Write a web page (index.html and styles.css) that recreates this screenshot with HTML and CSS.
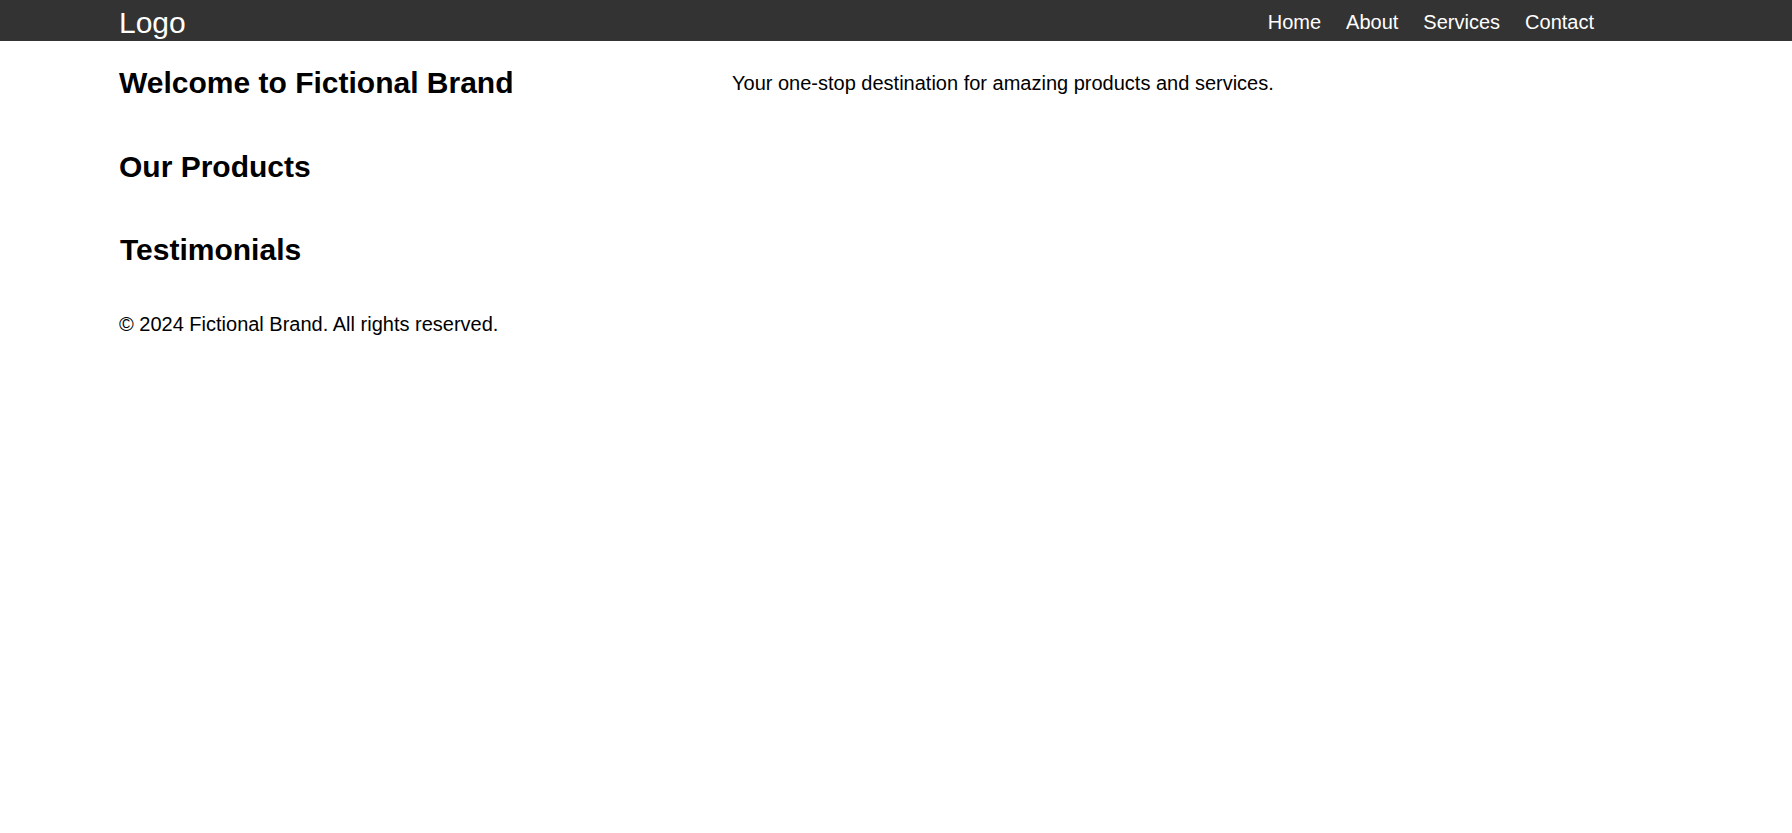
FILE: index.html
```html
<!DOCTYPE html>
<html lang="en">
<head>
<meta charset="utf-8">
<title>Fictional Brand</title>
<link rel="stylesheet" href="styles.css">
</head>
<body>
<header class="site-header">
  <div class="header-inner">
    <div class="logo">Logo</div>
    <nav class="nav">
      <a href="#">Home</a>
      <a href="#">About</a>
      <a href="#">Services</a>
      <a href="#">Contact</a>
    </nav>
  </div>
</header>
<main class="main">
  <section class="hero">
    <h2 class="hero-title">Welcome to Fictional Brand</h2>
    <p class="hero-text">Your one-stop destination for amazing products and services.</p>
  </section>
  <section class="section products">
    <h2 class="section-title">Our Products</h2>
  </section>
  <section class="section testimonials">
    <h2 class="section-title">Testimonials</h2>
  </section>
  <footer class="footer">
    <p>&copy; 2024 Fictional Brand. All rights reserved.</p>
  </footer>
</main>
</body>
</html>
```

FILE: styles.css
```css
* { box-sizing: border-box; }
html, body {
  margin: 0;
  padding: 0;
  background: #fff;
  color: #000;
  font-family: "Liberation Sans", Arial, sans-serif;
  font-size: 20px;
}
.site-header {
  background: #333;
  height: 41px;
}
.header-inner {
  display: flex;
  justify-content: space-between;
  align-items: flex-start;
  padding: 0 198px 0 117px;
  height: 41px;
}
.logo {
  color: #fff;
  font-size: 30px;
  line-height: 41px;
  padding-left: 2px;
  margin-top: 2px;
}
.nav {
  display: flex;
  gap: 25px;
  line-height: 41px;
  margin-top: 2px;
}
.nav a {
  color: #fff;
  text-decoration: none;
  font-size: 20px;
}
.main {
  padding: 0 119px;
}
.hero {
  display: flex;
  align-items: flex-start;
}
.hero-title {
  margin: 0;
  padding-top: 22px;
  width: 613px;
  font-size: 30px;
  line-height: 40px;
}
.hero-text {
  margin: 0;
  padding-top: 27px;
  line-height: 30px;
}
.section-title {
  margin: 0;
  font-size: 30px;
  line-height: 40px;
}
.products { padding-top: 44px; }
.testimonials { padding-top: 43px; padding-left: 1px; }
.footer p {
  margin: 0;
  padding-top: 39px;
  line-height: 30px;
}
```
